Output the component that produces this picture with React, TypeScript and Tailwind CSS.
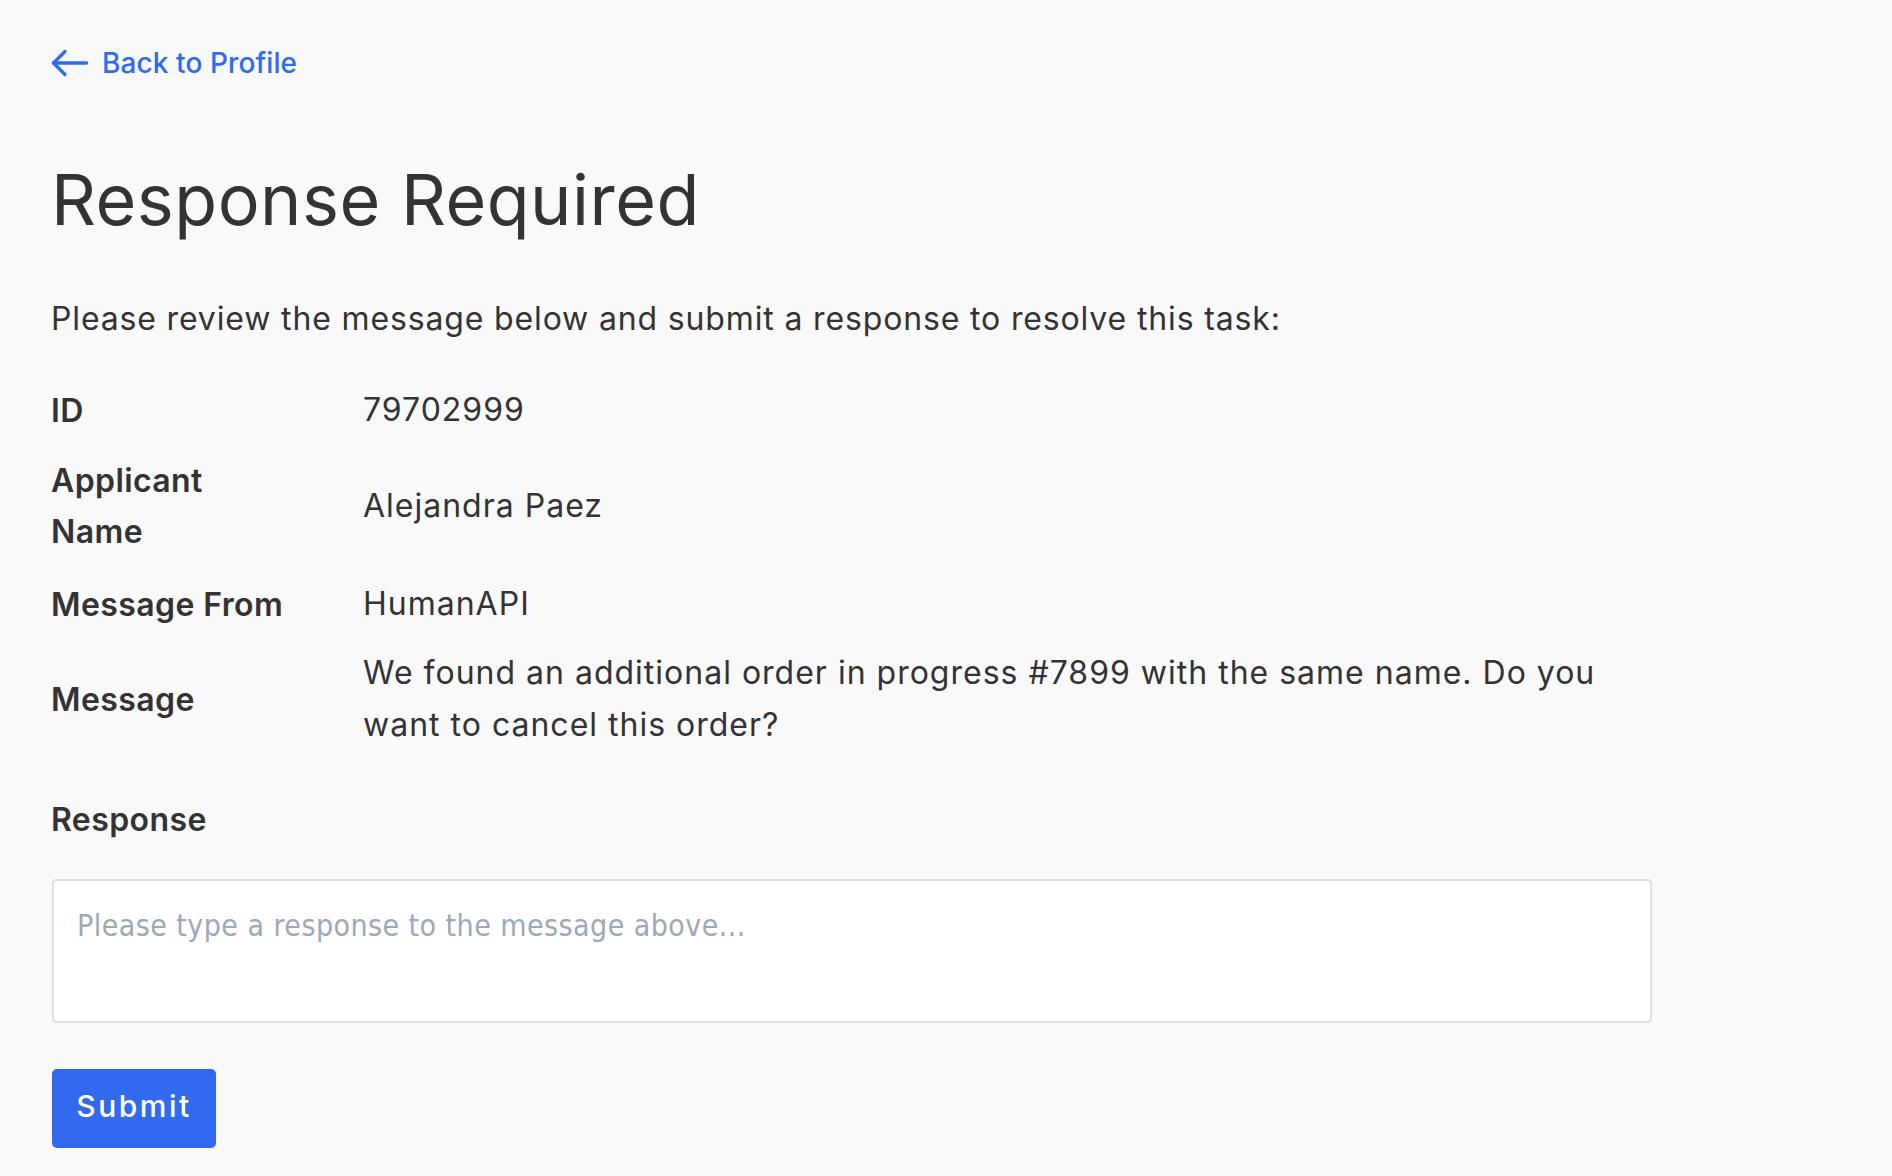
import { useState } from "react";

/* ── data ─────────────────────────────────────────────── */

const FIELDS: { label: React.ReactNode; value: React.ReactNode; gap: string }[] = [
  { label: "ID", value: "79702999", gap: "mt-0" },
  {
    label: (
      <>
        Applicant
        <br />
        Name
      </>
    ),
    value: "Alejandra Paez",
    gap: "mt-[19px]",
  },
  { label: "Message From", value: "HumanAPI", gap: "mt-[21px]" },
  {
    label: "Message",
    value: (
      <>
        We found an additional order in progress #7899 with the same name. Do you
        <br />
        want to cancel this order?
      </>
    ),
    gap: "mt-[17px]",
  },
];

function BackArrow() {
  return (
    <svg width="38" height="28" viewBox="0 0 38 28" fill="none" stroke="currentColor" strokeWidth="3.4" strokeLinecap="round" strokeLinejoin="round">
      <path d="M2.5 14h33" />
      <path d="M14 2.5 2.5 14 14 25.5" />
    </svg>
  );
}

export default function App() {
  const [response, setResponse] = useState("");

  return (
    <div className="min-h-screen bg-[#f9f9f9] px-[51px] pt-[48px] text-[#333333] [font-family:Inter,'Noto_Sans',sans-serif]">
      {/* back link */}
      <a href="#" className="flex h-[30px] items-center gap-[13px] text-[28px] leading-[30px] font-medium text-[#2f6bf0]">
        <BackArrow />
        <span className="tracking-[0.1px]">Back to Profile</span>
      </a>

      <h1 className="mt-[82px] text-[70px] leading-[80px] font-normal tracking-[0.5px]">Response Required</h1>

      <p className="mt-[54px] text-[32px] leading-[50px] tracking-[0.85px]">
        Please review the message below and submit a response to resolve this task:
      </p>

      {/* details */}
      <div className="mt-[40px] flex flex-col text-[32px] leading-[51px]">
        {FIELDS.map((f, i) => (
          <div key={i} className={`flex items-center ${f.gap}`}>
            <div className="w-[312px] shrink-0 font-semibold tracking-[0.4px]">{f.label}</div>
            <div className="leading-[52px] tracking-[1px]">{f.value}</div>
          </div>
        ))}
      </div>

      {/* response */}
      <div className="mt-[43px] text-[32px] leading-[51px] font-semibold tracking-[0.4px]">Response</div>

      <textarea
        value={response}
        onChange={(e) => setResponse(e.target.value)}
        placeholder="Please type a response to the message above..."
        className="mt-[34px] ml-px block h-[144px] w-[1600px] resize-none rounded-[4px] border-2 border-[#e0e0e0] bg-white px-[23px] pt-[21px] pb-[16px] text-[30px] leading-[48px] tracking-[0.45px] text-[#333333] outline-none placeholder:text-[#9ca8bb] [font-family:'DejaVu_Sans_Condensed','Liberation_Sans_Narrow',Roboto,sans-serif]"
      />

      <button className="mt-[46px] ml-px flex h-[79px] w-[164px] items-center justify-center rounded-[5px] bg-[#3169ef] pb-[4px] text-[30px] font-medium tracking-[2.5px] text-white">
        Submit
      </button>
    </div>
  );
}
